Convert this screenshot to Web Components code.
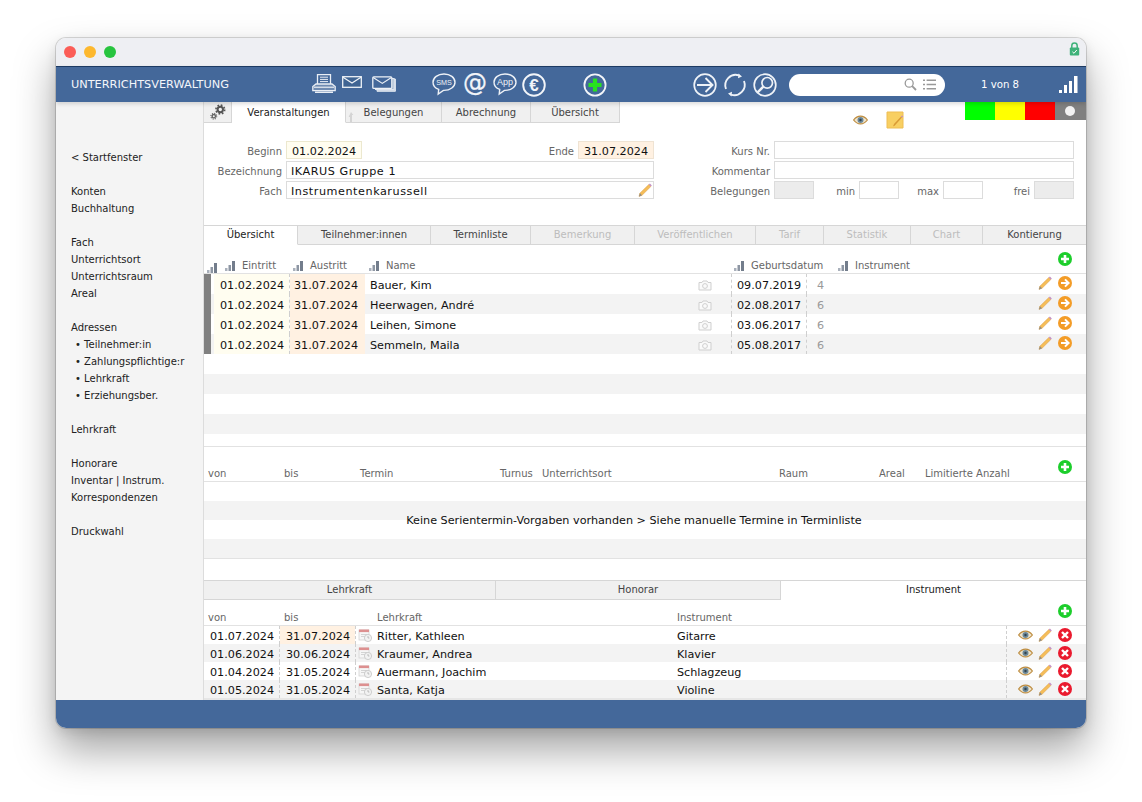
<!DOCTYPE html>
<html lang="de">
<head>
<meta charset="utf-8">
<title>Unterrichtsverwaltung</title>
<style>
html,body{margin:0;background:#fff;font-family:"DejaVu Sans",Verdana,sans-serif;font-size:11.2px;color:#111}
body{width:1142px;height:802px;overflow:hidden;padding:38px 0 0 56px;box-sizing:border-box}
</style>
</head>
<body>
<app-window>
  <title-bar slot="title"></title-bar>
  <tool-bar slot="tools"></tool-bar>
  <side-nav slot="side"></side-nav>
  <main-pane slot="main"></main-pane>
</app-window>
<script>
const ICONS = {
  pencil:[14,14,`<path d="M1 13.4 1.9 10.2 10.8 1.6 12.8 3.6 4 12.3Z" fill="#f5bd58" stroke="#d8993f" stroke-width=".5"/><path d="M1 13.4 1.9 10.2 4 12.3Z" fill="#8b8b8b"/><path d="M10.8 1.6 11.9.6 13.8 2.5 12.8 3.6Z" fill="#c48fc4"/>`],
  eye:[15,10,`<path d="M.6 5C4.5-.2 10.5-.2 14.4 5 10.5 10.2 4.5 10.2.6 5Z" fill="#efe4cc" stroke="#bd8c3f" stroke-width="1.2"/><circle cx="7.5" cy="5" r="3" fill="#6a8798"/><circle cx="7.5" cy="5" r="1.2" fill="#33424d"/>`],
  camera:[14,11,`<path d="M1 2.5H4L5 1H9L10 2.5H13V10H1Z" fill="#fafafa" stroke="#cfcfcf"/><circle cx="7" cy="6" r="2.4" fill="none" stroke="#cfcfcf"/>`],
  calendar:[14,14,`<rect x="1" y="2" width="10" height="10" fill="#f6f6f6" stroke="#d4d4d4" stroke-width=".8"/><rect x="1" y="1.5" width="10" height="2.6" fill="#dd9090"/><path d="M3 6.5h6M3 8.5h4" stroke="#d4d4d4"/><circle cx="10" cy="10" r="3.6" fill="#f2f2f2" stroke="#c4c4c4" stroke-width=".8"/><path d="M10 8v2h1.4" fill="none" stroke="#aaa" stroke-width=".7"/>`],
  sort:[12,10,`<rect x="0" y="7" width="2.5" height="3" fill="#a9b0bb"/><rect x="3.5" y="4" width="2.5" height="6" fill="#8d96a3"/><rect x="7" y="0" width="3" height="10" fill="#737d8c"/>`],
  add:[14,14,`<circle cx="7" cy="7" r="7" fill="#1dce2c"/><path d="M7 3v8M3 7h8" stroke="#fff" stroke-width="2.6"/>`],
  go:[14,14,`<circle cx="7" cy="7" r="7" fill="#f39c27"/><path d="M3 7h7M7 3.4 10.6 7 7 10.6" fill="none" stroke="#fff" stroke-width="2"/>`],
  del:[14,14,`<circle cx="7" cy="7" r="7" fill="#ea1a2e"/><path d="M4 4l6 6M10 4l-6 6" stroke="#fff" stroke-width="2.4"/>`],
  gear:[16,16,`<circle cx="10.3" cy="5.5" r="2.7" fill="none" stroke="#555" stroke-width="2"/><circle cx="10.3" cy="5.5" r="4.4" fill="none" stroke="#555" stroke-width="1.6" stroke-dasharray="1.7 1.75"/><circle cx="3.8" cy="12.2" r="1.7" fill="none" stroke="#666" stroke-width="1.4"/><circle cx="3.8" cy="12.2" r="2.9" fill="none" stroke="#666" stroke-width="1.1" stroke-dasharray="1.1 1.18"/>`],
  note:[18,18,`<path d="M1 1H17V17H1Z" fill="#f8cf62" stroke="#eebd52"/><path d="M7 15.4 8 13 15 5.5 16 6.5 9 14.2Z" fill="#d99a35"/><path d="M15 5.5 16 4.4 17.2 5.5 16 6.5Z" fill="#c48fc4"/>`],
  lock:[11,14,`<path d="M2.8 6V3.8a2.7 2.7 0 0 1 5.4 0V6" fill="none" stroke="#3fb27a" stroke-width="1.5"/><rect x=".8" y="5.6" width="9.4" height="8" rx="1" fill="#3fb27a"/><path d="M3.4 9.8 5 11.3 7.8 8" fill="none" stroke="#fff" stroke-width="1"/>`],
  uparrow:[6,12,`<path d="M3 1 5.4 4H4V11H2V6H.6Z" fill="#d4d4d4"/>`],
  glass:[13,13,`<circle cx="5.2" cy="5.2" r="4" fill="none" stroke="#999" stroke-width="1.3"/><path d="M8.2 8.2 12 12" stroke="#999" stroke-width="1.8"/>`],
  list:[13,11,`<path d="M0 1.2h2M0 5.5h2M0 9.8h2" stroke="#999" stroke-width="1.4"/><path d="M3.6 1.2H13M3.6 5.5H13M3.6 9.8H13" stroke="#999" stroke-width="1.4"/>`],
  signal:[19,17,`<g fill="#fff"><rect x="0" y="14" width="3" height="3"/><rect x="5" y="9" width="3" height="8"/><rect x="10" y="5" width="3" height="12"/><rect x="15" y="0" width="3.5" height="17"/></g>`],
  printer:[24,19,`<g fill="none" stroke="#e9eef5"><path d="M5.5 10V.7H18.5V10" stroke-width="1.3"/><path d="M8 3.2h8M8 5.4h8M8 7.6h8"/><path d="M4 10H20L23.2 12.5V16.6H.8V12.5Z" fill="#dfe6f0" fill-opacity=".28" stroke-width="1.3"/><path d="M3 18.2H21" stroke-width="1.4"/></g><path d="M2 13.2H22" stroke="#fff"/>`],
  mail:[20,12,`<rect x=".7" y=".7" width="18.6" height="10.6" fill="#3f6493" stroke="#eef2f7" stroke-width="1.3"/><path d="M1 1.2 10 7 19 1.2" fill="none" stroke="#eef2f7" stroke-width="1.2"/>`],
  mails:[24,16,`<path d="M22 3h1.4v12.3H5V13" fill="#cfd9e6" stroke="#dfe6ef"/><rect x="3.5" y="2.5" width="18.5" height="11" fill="#9fb3cd" stroke="#dfe6ef"/><rect x=".8" y=".8" width="19" height="11.6" rx="1" fill="#44689a" stroke="#eef2f7" stroke-width="1.3"/><path d="M1.2 1.4 10.3 7.4 19.4 1.4" fill="none" stroke="#eef2f7" stroke-width="1.2"/>`],
  plus:[24,24,`<circle cx="12" cy="12" r="10.6" fill="#44689a" stroke="#f2f5f9" stroke-width="1.8"/><path d="M12 5.5v13M5.5 12h13" stroke="#27e21f" stroke-width="4.2"/>`],
  arrow:[24,24,`<circle cx="12" cy="12" r="10.8" fill="none" stroke="#eef2f7" stroke-width="1.7"/><path d="M4 12H19M12.5 5 19.5 12 12.5 19" fill="none" stroke="#eef2f7" stroke-width="1.9"/>`],
  refresh:[24,24,`<g fill="none" stroke="#eef2f7" stroke-width="1.9"><path d="M3 16A10.4 10.4 0 0 1 16 2.4"/><path d="M21 8A10.4 10.4 0 0 1 8 21.6"/></g><path d="M15.5 .6 19 3.6 15 5.2ZM8.5 23.4 5 20.4 9 18.8Z" fill="#eef2f7"/>`],
  search:[24,24,`<circle cx="12" cy="12" r="10.8" fill="none" stroke="#eef2f7" stroke-width="1.7"/><circle cx="14.2" cy="9.8" r="5.3" fill="none" stroke="#eef2f7" stroke-width="1.7"/><path d="M10.3 13.7 4.6 19.4" stroke="#eef2f7" stroke-width="2.4"/>`],
  sms:[24,22,`<path d="M12 1C5.8 1 1 4.6 1 9.2c0 3.2 2.3 5.9 5.7 7.2L6.2 21l5.2-3.6h.6c6.2 0 11-3.6 11-8.2S18.2 1 12 1Z" fill="#44689a" stroke="#eef2f7" stroke-width="1.4"/><text x="12" y="11.8" text-anchor="middle" font-family="Liberation Sans,sans-serif" font-size="7.2" fill="#eef2f7">SMS</text>`],
  app:[24,22,`<path d="M12 1C5.8 1 1 4.6 1 9.2c0 3.2 2.3 5.9 5.7 7.2L6.2 21l5.2-3.6h.6c6.2 0 11-3.6 11-8.2S18.2 1 12 1Z" fill="#44689a" stroke="#eef2f7" stroke-width="1.4"/><text x="12" y="12.4" text-anchor="middle" font-family="Liberation Sans,sans-serif" font-size="9" fill="#eef2f7">App</text>`],
  at:[24,24,`<text x="12" y="18.4" text-anchor="middle" font-family="DejaVu Sans,sans-serif" font-size="24" fill="#f2f5f9" stroke="#f2f5f9" stroke-width=".25">@</text>`],
  euro:[24,24,`<circle cx="12" cy="12" r="10.8" fill="none" stroke="#f2f5f9" stroke-width="1.9"/><text x="12" y="18" text-anchor="middle" font-family="Liberation Sans,sans-serif" font-weight="700" font-size="17" fill="#f2f5f9">€</text>`]
};

class Base extends HTMLElement {
  constructor(){ super(); this.attachShadow({mode:'open'}); }
}
class UiIcon extends Base {
  connectedCallback(){
    const [w,h,body] = ICONS[this.getAttribute('name')];
    const s = this.getAttribute('size');
    const W = s ? +s : w, H = s ? +s*h/w : h;
    this.shadowRoot.innerHTML = `<style>:host{display:inline-block;flex:none;line-height:0}svg{display:block;overflow:visible}</style>
      <svg xmlns="http://www.w3.org/2000/svg" width="${W}" height="${H}" viewBox="0 0 ${w} ${h}">${body}</svg>`;
  }
}
customElements.define('ui-icon', UiIcon);

class AppWindow extends Base {
  constructor(){ super();
    this.shadowRoot.innerHTML = `<style>
      :host{display:grid;grid-template-columns:148px 882px;grid-template-rows:28px 36px 598px 28px;width:1030px;height:690px;border-radius:10px;overflow:hidden;background:#fff;
        box-shadow:0 0 0 1px rgba(0,0,0,.14),0 22px 42px rgba(0,0,0,.36),0 4px 12px rgba(0,0,0,.1)}
      ::slotted([slot=title]),::slotted([slot=tools]){grid-column:1/3}
      footer{grid-column:1/3;background:#44689a}
    </style>
    <slot name="title"></slot><slot name="tools"></slot><slot name="side"></slot><slot name="main"></slot><footer></footer>`;
  }
}
customElements.define('app-window', AppWindow);

class TitleBar extends Base {
  constructor(){ super();
    this.shadowRoot.innerHTML = `<style>
      :host{display:flex;align-items:center;background:#eeeff3;padding:0 6px 0 8px;gap:8px}
      i{display:block;width:12px;height:12px;border-radius:50%}
      .r{background:#fb5d57}.y{background:#fdb82e}.g{background:#27c43f}
      ui-icon{margin-left:auto;margin-top:-7px}
    </style><i class="r"></i><i class="y"></i><i class="g"></i><ui-icon name="lock"></ui-icon>`;
  }
}
customElements.define('title-bar', TitleBar);

class ToolBar extends Base {
  constructor(){ super();
    const ic=(n,ml,extra)=>`<ui-icon name="${n}" style="margin-left:${ml}px;${extra||''}"></ui-icon>`;
    this.shadowRoot.innerHTML = `<style>
      :host{display:flex;align-items:center;background:#44689a;border-top:1px solid #1c3a63;box-sizing:border-box;color:#fff;position:relative;z-index:2;box-shadow:0 2px 4px rgba(0,0,0,.14);padding-left:15px}
      b{font-weight:400;font-size:11.3px;width:242px;flex:none;color:#f4f6fa}
      .find{display:flex;align-items:center;justify-content:flex-end;gap:6px;width:156px;height:22px;border-radius:11px;background:#fff;box-sizing:border-box;padding-right:9px;margin-left:12px;flex:none}
      span{width:110px;text-align:center;flex:none;font-size:10.2px}
    </style><b>UNTERRICHTSVERWALTUNG</b>
    ${ic('printer',-1,'margin-top:-3px')}${ic('mail',6,'margin-top:-5px')}${ic('mails',10,'margin-top:-1px')}
    ${ic('sms',36,'margin-top:-1px')}${ic('at',7)}${ic('app',6,'margin-top:-1px')}${ic('euro',5)}
    ${ic('plus',37)}${ic('arrow',86)}${ic('refresh',6)}${ic('search',6)}
    <div class="find"><ui-icon name="glass"></ui-icon><ui-icon name="list"></ui-icon></div>
    <span>1 von 8</span>${ic('signal',4)}`;
  }
}
customElements.define('tool-bar', ToolBar);

class SideNav extends Base {
  constructor(){ super();
    const groups=[['&lt; Startfenster'],['Konten','Buchhaltung'],['Fach','Unterrichtsort','Unterrichtsraum','Areal'],
      ['Adressen','• Teilnehmer:in','• Zahlungspflichtige:r','• Lehrkraft','• Erziehungsber.'],['Lehrkraft'],['Honorare','Inventar | Instrum.','Korrespondenzen'],['Druckwahl']];
    this.shadowRoot.innerHTML = `<style>
      :host{display:flex;flex-direction:column;gap:17px;background:#f4f4f4;border-right:1px solid #dcdcdc;padding:47px 0 0 15px;box-sizing:border-box;font-size:10px;line-height:17px;color:#222}
      a{display:block;white-space:nowrap}a.s{padding-left:4px}
    </style>`+groups.map(g=>`<div>${g.map(t=>`<a${t[0]=='•'?' class="s"':''}>${t}</a>`).join('')}</div>`).join('');
  }
}
customElements.define('side-nav', SideNav);

class TabItem extends Base {
  constructor(){ super();
    this.shadowRoot.innerHTML = `<style>
      :host{display:flex;align-items:center;justify-content:center;box-sizing:border-box;background:#f0f0f0;border-right:1px solid #d6d6d6;border-bottom:1px solid #d6d6d6;color:#444;font-size:10px;height:100%;position:relative;flex:none;padding-bottom:var(--tab-pb,0)}
      :host([active]){background:#fff;border-bottom-color:#fff;color:#222}
      :host([off]){color:#bdbdbd}
    </style><slot></slot>`;
  }
}
customElements.define('tab-item', TabItem);

class TabStrip extends Base {
  constructor(){ super();
    this.shadowRoot.innerHTML = `<style>
      :host{display:flex;box-sizing:border-box;flex:none}
      :host([ruled]){border-top:1px solid #d6d6d6;--tab-pb:2px}
    </style><slot></slot>`;
  }
}
customElements.define('tab-strip', TabStrip);

class GridRow extends Base {
  constructor(){ super();
    this.shadowRoot.innerHTML = `<style>
      :host{display:grid;grid-template-columns:var(--cols);box-sizing:border-box;height:var(--h,20px);align-items:stretch}
      :host([alt]){background:#f3f3f3}
      :host([head]){border-bottom:1px solid #e2e2e2;height:var(--hh,29px);align-items:end;color:#666;font-size:10px}
    </style><slot></slot>`;
  }
}
customElements.define('grid-row', GridRow);

class GCell extends Base {
  constructor(){ super();
    this.shadowRoot.innerHTML = `<style>
      :host{display:flex;align-items:center;min-width:0;white-space:nowrap;box-sizing:border-box;line-height:14px}
      :host([tx]){padding-top:4px}
      :host([cam]){padding-top:2px}
      :host([up]){padding-bottom:2px}
      :host([y]){background:#fffdf0 padding-box}
      :host([o]){background:#fff1e2 padding-box}
      :host([sep]){border-left:1px dashed #cfcfcf}
      :host([mark]){background:#808080}
      :host([dim]){color:#999}
      :host([end]){gap:5px}
      :host([add]){padding-bottom:7px;align-self:end}
    </style><slot></slot>`;
    const p=this.getAttribute('pl'); if(p) this.style.paddingLeft=p+'px';
  }
}
customElements.define('g-cell', GCell);

class FieldBox extends Base {
  constructor(){ super();
    this.shadowRoot.innerHTML = `<style>
      :host{display:flex;align-items:center;justify-content:space-between;box-sizing:border-box;height:18px;border:1px solid #dcdcdc;background:#fff;padding:2px 4px 0;color:#111;font-size:11.2px;letter-spacing:.55px;white-space:nowrap;flex:none}
      :host([y]){background:#fffdf0;border-color:#ece8cf;padding-left:5px;letter-spacing:0}
      :host([o]){background:#fff1e2;border-color:#efe3d3;padding-left:5px;letter-spacing:0}
      :host([grey]){background:#ececec}
    </style><slot></slot>`;
  }
}
customElements.define('field-box', FieldBox);

class FormPanel extends Base {
  constructor(){ super();
    this.shadowRoot.innerHTML = `<style>
      :host{display:flex;height:102px;box-sizing:border-box;padding-top:18px;flex:none;color:#666;font-size:10px}
      .col{display:grid;row-gap:2px;grid-auto-rows:18px;align-items:center}
      .l{grid-template-columns:78px 76px 1fr 76px;column-gap:4px;width:450px}
      .r{margin-left:20px;width:400px;grid-template-columns:100px 40px 45px 40px 44px 40px 51px 40px}
      label{text-align:right;white-space:nowrap;padding-top:2px}
      .lr{padding-right:4px}
      .wide{grid-column:2/-1}
    </style>
    <div class="col l">
      <label>Beginn</label><field-box y>01.02.2024</field-box><label>Ende</label><field-box o>31.07.2024</field-box>
      <label>Bezeichnung</label><field-box class="wide">IKARUS Gruppe 1</field-box>
      <label>Fach</label><field-box class="wide">Instrumentenkarussell<ui-icon name="pencil" style="margin:-2px -3px 0 0"></ui-icon></field-box>
    </div>
    <div class="col r">
      <label class="lr">Kurs Nr.</label><field-box class="wide"></field-box>
      <label class="lr">Kommentar</label><field-box class="wide"></field-box>
      <label class="lr">Belegungen</label><field-box grey></field-box>
      <label class="lr">min</label><field-box></field-box>
      <label class="lr">max</label><field-box></field-box>
      <label class="lr">frei</label><field-box grey></field-box>
    </div>`;
  }
}
customElements.define('form-panel', FormPanel);

class MainPane extends Base {
  constructor(){ super();
    const sortH=t=>`<g-cell end><ui-icon name="sort"></ui-icon>${t}</g-cell>`;
    const people=[['Bauer, Kim','09.07.2019','4'],['Heerwagen, André','02.08.2017','6'],['Leihen, Simone','03.06.2017','6'],['Semmeln, Maila','05.08.2017','6']];
    const r1=people.map((p,i)=>`<grid-row ${i%2?'alt':''}>
      <g-cell mark></g-cell><g-cell></g-cell><g-cell tx y pl="6">01.02.2024</g-cell><g-cell tx o sep pl="4">31.07.2024</g-cell>
      <g-cell tx pl="5">${p[0]}</g-cell><g-cell cam><ui-icon name="camera"></ui-icon></g-cell>
      <g-cell tx sep pl="5">${p[1]}</g-cell><g-cell tx sep dim pl="10">${p[2]}</g-cell>
      <g-cell up><ui-icon name="pencil"></ui-icon></g-cell><g-cell up><ui-icon name="go"></ui-icon></g-cell></grid-row>`).join('');
    const blank=[0,1,0,1].map(a=>`<grid-row ${a?'alt':''}></grid-row>`).join('');
    const t=[['01.07.2024','31.07.2024','Ritter, Kathleen','Gitarre'],['01.06.2024','30.06.2024','Kraumer, Andrea','Klavier'],['01.04.2024','31.05.2024','Auermann, Joachim','Schlagzeug'],['01.05.2024','31.05.2024','Santa, Katja','Violine']];
    const r3=t.map((p,i)=>`<grid-row ${i%2?'alt':''}>
      <g-cell tx pl="6">${p[0]}</g-cell><g-cell tx sep pl="6" ${i==0?'o':''}>${p[1]}</g-cell>
      <g-cell sep pl="2"><ui-icon name="calendar"></ui-icon></g-cell><g-cell tx>${p[2]}</g-cell><g-cell tx>${p[3]}</g-cell>
      <g-cell sep pl="11"><ui-icon name="eye"></ui-icon></g-cell><g-cell><ui-icon name="pencil"></ui-icon></g-cell><g-cell><ui-icon name="del"></ui-icon></g-cell></grid-row>`).join('');
    this.shadowRoot.innerHTML = `<style>
      :host{display:flex;flex-direction:column;background:#fff;min-width:0;height:598px;overflow:hidden}
      .top{display:flex;height:21px;flex:none;align-items:flex-start}
      .top tab-strip{height:21px}
      .eye{margin:13px 0 0 233px}
      .note{margin:9px 0 0 18px}
      .lamps{display:grid;grid-template-columns:30px 30px 30px 31px;height:18px;margin-left:61px}
      .lamps i{display:block}
      .dot{background:#808080;display:flex!important;align-items:center;justify-content:center;padding-right:2px;box-sizing:border-box}
      .dot::after{content:"";width:10px;height:10px;border-radius:50%;background:#f2f2f2}
      .t1{--cols:7px 3px 75px 76px 333px 33px 75px 232px 20px 28px}
      .h1{--cols:21px 68px 76px 365px 104px 220px 28px}
      .t2{--cols:80px 76px 140px 42px 237px 100px 46px 133px 28px;--hh:35px}
      .t3{--cols:75px 76px 22px 300px 329px 32px 20px 28px;--h:18px}
      .h3{--cols:80px 93px 300px 381px 28px;--hh:26px}
      .gap1{height:12px;border-bottom:1px solid #e2e2e2;flex:none}
      .rows2{position:relative;--h:19px;--cols:1fr;flex:none}
      .msg{position:absolute;left:0;width:860px;top:29px;text-align:center;color:#111;line-height:20px}
      .gap2{height:22px;border-top:1px solid #e2e2e2;box-sizing:border-box;flex:none}
      .end{height:2px;background:#e6e6e6;flex:none}
      .strip3{height:20px;border-top:1px solid #d6d6d6}
    </style>
    <div class="top">
      <tab-strip>
        <tab-item style="width:28px"><ui-icon name="gear" size="16"></ui-icon></tab-item>
        <tab-item active style="width:114px">Veranstaltungen</tab-item>
        <tab-item style="width:96px"><ui-icon name="uparrow" style="position:absolute;left:2px;top:9px"></ui-icon>Belegungen</tab-item>
        <tab-item style="width:89px">Abrechnung</tab-item>
        <tab-item style="width:89px">Übersicht</tab-item>
      </tab-strip>
      <ui-icon class="eye" name="eye"></ui-icon>
      <ui-icon class="note" name="note"></ui-icon>
      <div class="lamps"><i style="background:#00ff00"></i><i style="background:#ffff00"></i><i style="background:#ff0000"></i><i class="dot"></i></div>
    </div>
    <form-panel></form-panel>
    <tab-strip ruled style="height:20px">
      <tab-item active style="width:94px">Übersicht</tab-item>
      <tab-item style="width:133px">Teilnehmer:innen</tab-item>
      <tab-item style="width:100px">Terminliste</tab-item>
      <tab-item off style="width:104px">Bemerkung</tab-item>
      <tab-item off style="width:121px">Veröffentlichen</tab-item>
      <tab-item off style="width:68px">Tarif</tab-item>
      <tab-item off style="width:87px">Statistik</tab-item>
      <tab-item off style="width:72px">Chart</tab-item>
      <tab-item style="width:103px;border-right:0">Kontierung</tab-item>
    </tab-strip>
    <grid-row head class="h1">
      <g-cell end pl="3"><ui-icon name="sort"></ui-icon></g-cell>${sortH('Eintritt')}${sortH('Austritt')}${sortH('Name')}${sortH('Geburtsdatum')}${sortH('Instrument')}
      <g-cell add><ui-icon name="add"></ui-icon></g-cell>
    </grid-row>
    <div class="t1" style="flex:none">${r1}${blank}</div>
    <div class="gap1"></div>
    <grid-row head class="t2">
      <g-cell end pl="4">von</g-cell><g-cell end>bis</g-cell><g-cell end>Termin</g-cell><g-cell end>Turnus</g-cell><g-cell end>Unterrichtsort</g-cell><g-cell end>Raum</g-cell><g-cell end>Areal</g-cell><g-cell end>Limitierte Anzahl</g-cell>
      <g-cell add><ui-icon name="add"></ui-icon></g-cell>
    </grid-row>
    <div class="rows2">${blank}<div class="msg">Keine Serientermin-Vorgaben vorhanden &gt; Siehe manuelle Termine in Terminliste</div></div>
    <div class="gap2"></div>
    <tab-strip ruled class="strip3">
      <tab-item style="width:292px">Lehrkraft</tab-item>
      <tab-item style="width:285px">Honorar</tab-item>
      <tab-item active style="width:305px;border-right:0">Instrument</tab-item>
    </tab-strip>
    <grid-row head class="h3">
      <g-cell end pl="4">von</g-cell><g-cell end>bis</g-cell><g-cell end>Lehrkraft</g-cell><g-cell end>Instrument</g-cell>
      <g-cell add><ui-icon name="add"></ui-icon></g-cell>
    </grid-row>
    <div class="t3" style="flex:none">${r3}</div>
    <div class="end"></div>`;
  }
}
customElements.define('main-pane', MainPane);
</script>
</body>
</html>
